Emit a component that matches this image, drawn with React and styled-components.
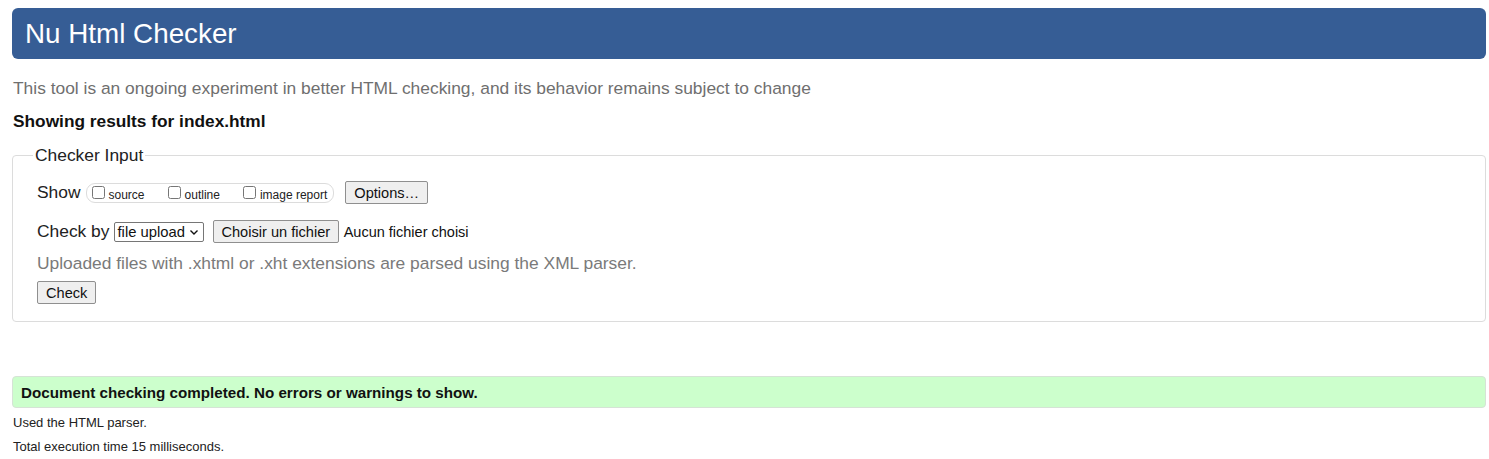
import styled, { createGlobalStyle } from "styled-components";

const GlobalStyle = createGlobalStyle`
  html, body {
    margin: 0;
    padding: 0;
    background: #ffffff;
  }
  body {
    font-family: "Liberation Sans", Arial, sans-serif;
    color: #222222;
  }
`;

const Page = styled.div`
  padding: 8px 3px 0 12px;
`;

const Header = styled.h1`
  margin: 0;
  height: 51px;
  display: flex;
  align-items: center;
  padding: 0 13px;
  background: #365d95;
  color: #ffffff;
  border-radius: 6px;
  font-size: 27.8px;
  font-weight: normal;
`;

const Intro = styled.p`
  margin: 19px 0 0 1px;
  font-size: 17.4px;
  line-height: 20px;
  color: #6f6f6f;
`;

const ResultsFor = styled.h2`
  margin: 13px 0 0 1px;
  font-size: 17.3px;
  line-height: 20px;
  font-weight: bold;
  color: #111111;
`;

const Fieldset = styled.fieldset`
  margin: 14px 0 0;
  padding: 6px 24px 17px;
  border: 1px solid #dcdcdc;
  border-radius: 4px;
`;

const Legend = styled.legend`
  padding: 0 2px;
  margin-left: -4px;
  font-size: 17.4px;
  color: #222222;
`;

const Row = styled.div`
  display: flex;
  align-items: center;
  gap: ${(p) => p.$gap || 6}px;
  margin-top: ${(p) => p.$top || 0}px;
  font-size: 17.4px;
  color: #222222;
`;

const Pill = styled.div`
  display: flex;
  align-items: center;
  height: 18px;
  padding: 0 6px 0 5px;
  border: 1px solid #dcdcdc;
  border-radius: 9px;
  gap: 23px;
`;

const CheckLabel = styled.label`
  display: flex;
  align-items: center;
  font-size: 12px;
  color: #222222;

  span {
    padding-top: 4px;
  }

  input {
    margin: 0 4px 0 0;
    width: 13px;
    height: 13px;
  }
`;

const Button = styled.button`
  font-family: "Liberation Sans", Arial, sans-serif;
  font-size: ${(p) => p.$size || 14.6}px;
  height: ${(p) => p.$h || 23}px;
  padding: 0 ${(p) => p.$px || 8}px;
  background: #efefef;
  border: 1px solid #8f8f8f;
  border-radius: 2px;
  color: #111111;
  margin-left: ${(p) => p.$ml || 0}px;
`;

const Select = styled.div`
  display: flex;
  align-items: center;
  gap: 4px;
  height: 18px;
  padding: 0 4px 0 3px;
  border: 1px solid #767676;
  border-radius: 2px;
  font-size: 14.8px;
  color: #111111;

  svg {
    width: 10px;
    height: 10px;
  }
`;

const NoFile = styled.span`
  font-size: 14.5px;
  color: #111111;
  margin-left: 1px;
`;

const Note = styled.p`
  margin: 10px 0 0;
  font-size: 17.4px;
  line-height: 20px;
  color: #7a7a7a;
`;

const Success = styled.div`
  margin-top: 54px;
  height: 30px;
  display: flex;
  align-items: center;
  padding: 0 8px;
  background: #ccffcc;
  border: 1px solid #d6e3d6;
  border-radius: 4px;
  font-size: 15.2px;
  font-weight: bold;
  color: #111111;
`;

const Small = styled.p`
  margin: ${(p) => p.$top || 0}px 0 0 1px;
  font-size: 13px;
  line-height: 16px;
  color: #222222;
`;

export default function App() {
  return (
    <>
      <GlobalStyle />
      <Page>
        <Header>Nu Html Checker</Header>
        <Intro>
          This tool is an ongoing experiment in better HTML checking, and its
          behavior remains subject to change
        </Intro>
        <ResultsFor>Showing results for index.html</ResultsFor>
        <Fieldset>
          <Legend>Checker Input</Legend>
          <Row $top={9} $gap={5}>
            <span>Show</span>
            <Pill>
              <CheckLabel>
                <input type="checkbox" />
                <span>source</span>
              </CheckLabel>
              <CheckLabel>
                <input type="checkbox" />
                <span>outline</span>
              </CheckLabel>
              <CheckLabel>
                <input type="checkbox" />
                <span>image report</span>
              </CheckLabel>
            </Pill>
            <Button $ml={6}>Options…</Button>
          </Row>
          <Row $top={16} $gap={4}>
            <span>Check by</span>
            <Select>
              file upload
              <svg viewBox="0 0 10 10">
                <path d="M1.5 3.5 L5 7 L8.5 3.5" fill="none" stroke="#111" strokeWidth="1.4" />
              </svg>
            </Select>
            <Button $ml={5} $px={7.5}>Choisir un fichier</Button>
            <NoFile>Aucun fichier choisi</NoFile>
          </Row>
          <Note>Uploaded files with .xhtml or .xht extensions are parsed using the XML parser.</Note>
          <Row $top={8}>
            <Button>Check</Button>
          </Row>
        </Fieldset>
        <Success>Document checking completed. No errors or warnings to show.</Success>
        <Small $top={7}>Used the HTML parser.</Small>
        <Small $top={8}>Total execution time 15 milliseconds.</Small>
      </Page>
    </>
  );
}
